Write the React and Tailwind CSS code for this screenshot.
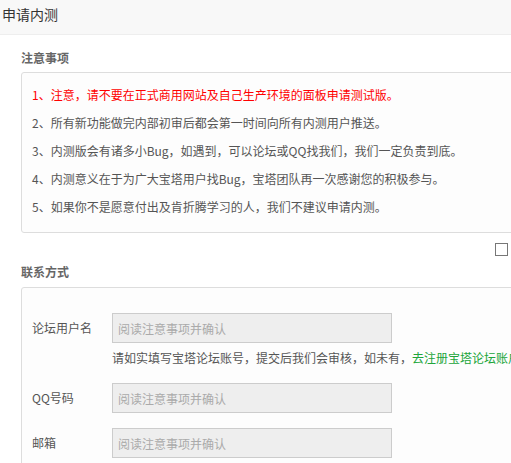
const notes = [
  { text: "1、注意，请不要在正式商用网站及自己生产环境的面板申请测试版。", red: true },
  { text: "2、所有新功能做完内部初审后都会第一时间向所有内测用户推送。" },
  { text: "3、内测版会有诸多小Bug，如遇到，可以论坛或QQ找我们，我们一定负责到底。" },
  { text: "4、内测意义在于为广大宝塔用户找Bug，宝塔团队再一次感谢您的积极参与。" },
  { text: "5、如果你不是愿意付出及肯折腾学习的人，我们不建议申请内测。" },
];

function Field({ label, className = "" }) {
  return (
    <div className={"flex items-center " + className}>
      <span className="w-[80px] shrink-0 text-[12px] leading-[20px] text-[#555]">{label}</span>
      <input
        disabled
        placeholder="阅读注意事项并确认"
        className="h-[30px] w-[280px] border border-[#ccc] bg-[#eee] pl-[5px] text-[12px] outline-none placeholder:text-[#aaa]"
      />
    </div>
  );
}

export default function App() {
  return (
    <div
      className="h-[463px] w-[511px] overflow-hidden bg-white"
      style={{ fontFamily: '"Noto Sans CJK SC", "Noto Sans", sans-serif' }}
    >
      <div className="flex h-[35px] items-center border-b border-[#eee] bg-[#f8f8f8] pb-[6px] pl-[2px] text-[14px] text-[#333]">
        申请内测
      </div>

      <div className="pl-[21px]">
        <h3 className="mt-[13px] text-[12px] font-bold leading-[20px] text-[#666]">注意事项</h3>
        <div className="mt-[4px] w-[560px] rounded-[3px] border border-[#ddd] bg-[#fdfdfd] pb-[11px] pl-[10px] pt-[8px]">
          {notes.map((n) => (
            <p
              key={n.text}
              className={"text-[12px] leading-[28px] " + (n.red ? "text-[#f00]" : "text-[#555]")}
            >
              {n.text}
            </p>
          ))}
        </div>

        <div className="mt-[10px] flex w-[487px] justify-end">
          <span className="h-[13px] w-[13px] border border-[#777] bg-white" />
        </div>

        <h3 className="mt-[6px] text-[12px] font-bold leading-[20px] text-[#666]">联系方式</h3>
        <div className="mt-[5px] h-[200px] w-[560px] rounded-[3px] border border-[#ddd] bg-[#fdfdfd] pl-[10px] pt-[25px]">
          <Field label="论坛用户名" />
          <p className="ml-[80px] mt-[5px] whitespace-nowrap text-[12px] leading-[20px] text-[#555]">
            请如实填写宝塔论坛账号，提交后我们会审核，如未有，
            <span className="text-[#20a53a]">去注册宝塔论坛账户</span>
          </p>
          <Field label="QQ号码" className="mt-[15px]" />
          <Field label="邮箱" className="mt-[15px]" />
        </div>
      </div>
    </div>
  );
}
